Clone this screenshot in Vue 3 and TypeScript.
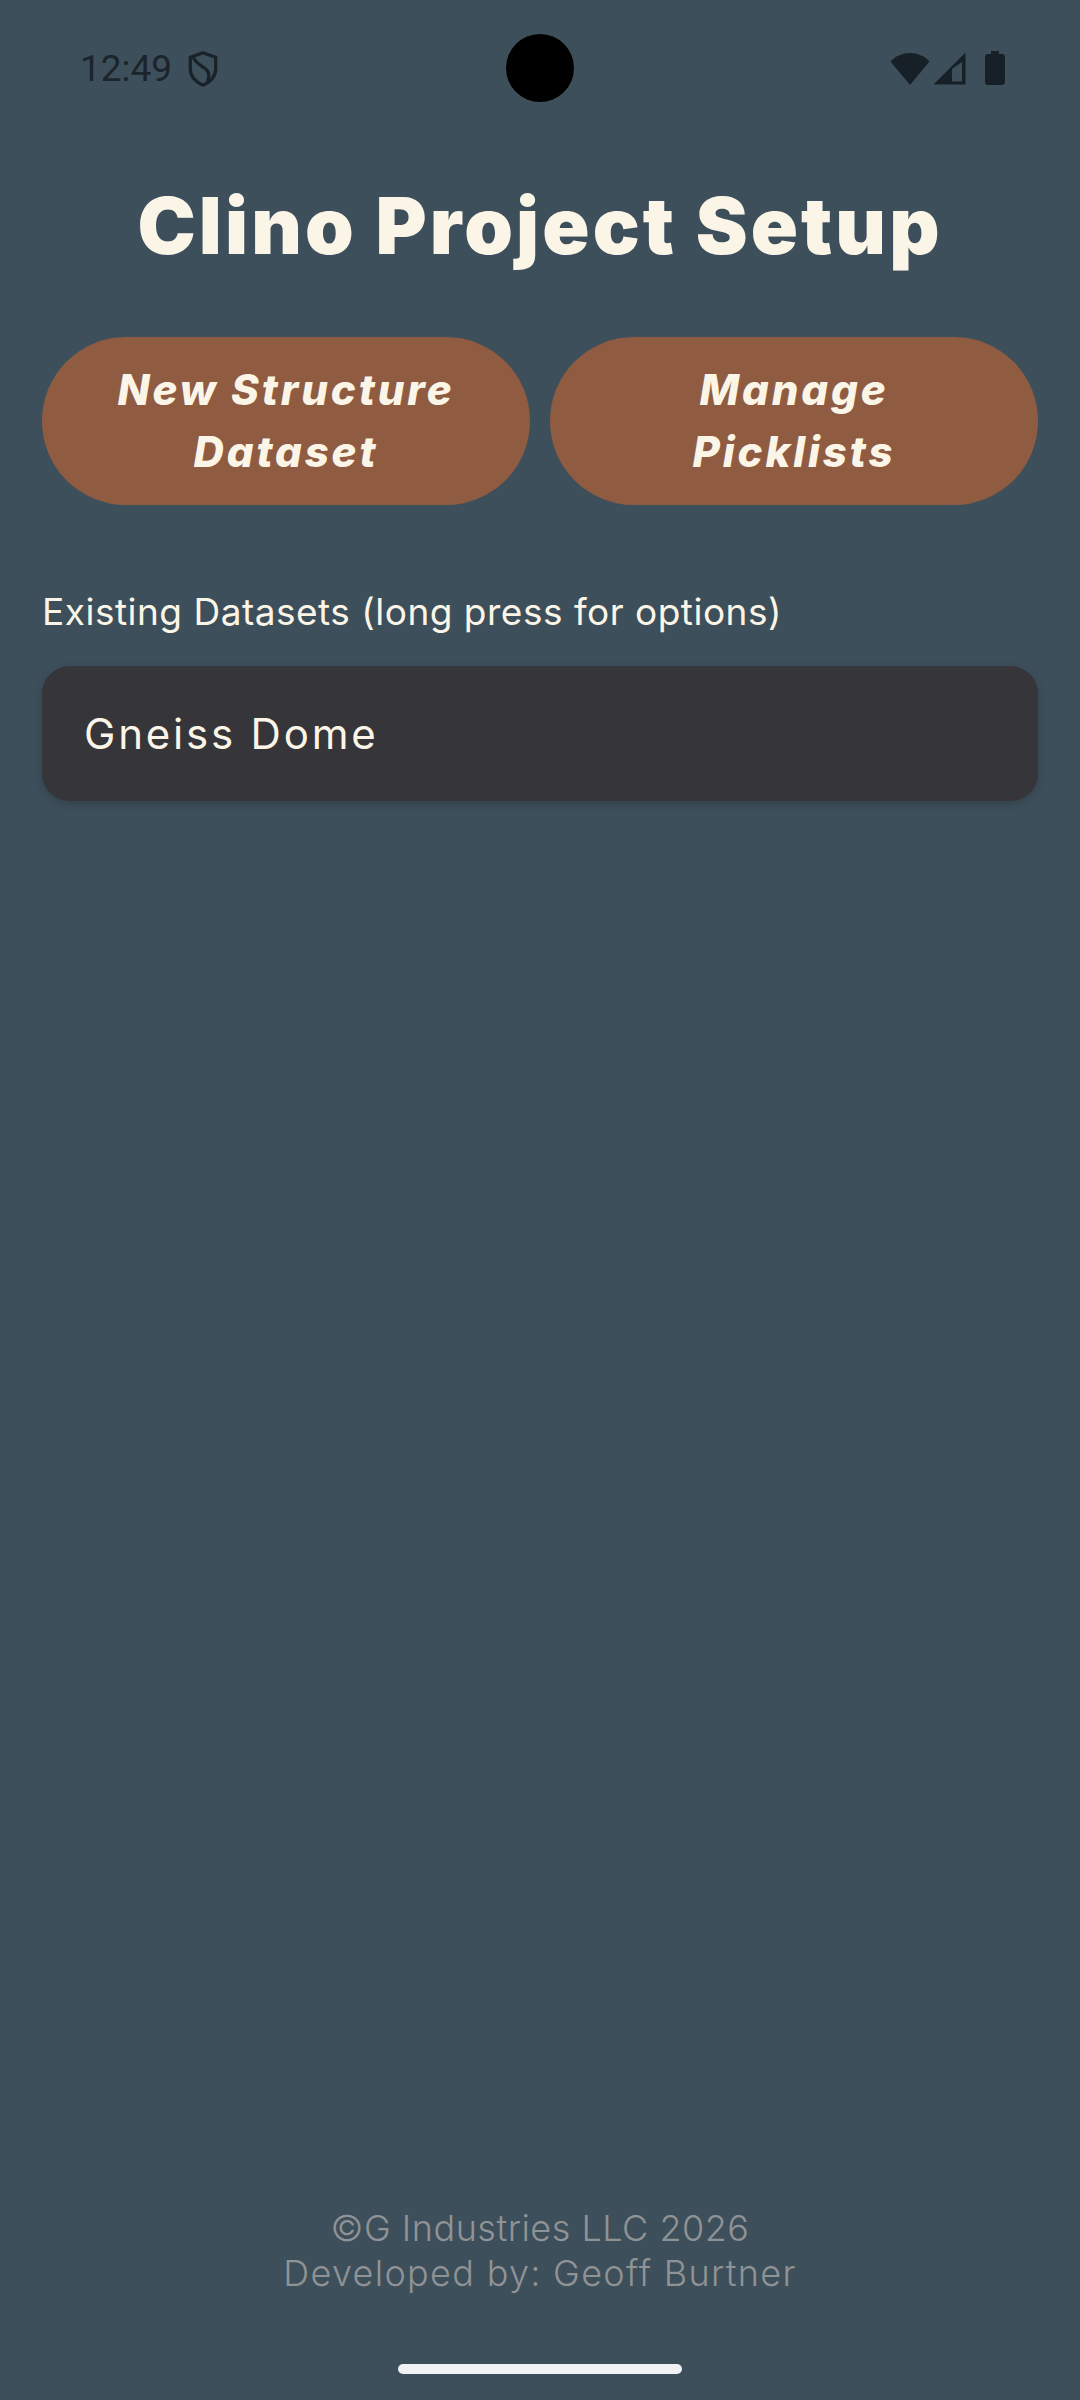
<template>
  <div class="screen">
    <header class="status">
      <div class="status-left">
        <span class="time">12:49</span>
        <svg class="shield" viewBox="0 0 30 36" width="30" height="36">
          <path d="M15 1.8 L27.7 6.2 V18 C27.7 25.5 22 31 15 34.2 C8 31 2.3 25.5 2.3 18 V6.2 Z" fill="none" stroke="#1a2229" stroke-width="3.2" stroke-linejoin="round" />
          <path d="M5 5 C6 11 12 14 16.5 17 C21 20 22 25 19.5 31" fill="none" stroke="#1a2229" stroke-width="3.2" />
        </svg>
      </div>
      <div class="camera"></div>
      <div class="status-right">
        <svg width="40" height="33" viewBox="0 0 40 33">
          <path d="M0.5 9.5 C11 -2 29 -2 39.5 9.5 L20 33 Z" fill="#182027" />
        </svg>
        <svg class="signal" width="33" height="33" viewBox="0 0 33 33">
          <path fill-rule="evenodd" d="M32.5 0.5 V32.5 H0.5 Z M29 10 L19 17 V29.5 H29 Z" fill="#182027" />
        </svg>
        <svg class="battery" width="20" height="34" viewBox="0 0 20 34">
          <path d="M6 0 H14 V3 H17 Q20 3 20 6 V31 Q20 34 17 34 H3 Q0 34 0 31 V6 Q0 3 3 3 H6 Z" fill="#182027" />
        </svg>
      </div>
    </header>

    <h1 class="title">Clino Project Setup</h1>

    <div class="actions">
      <button v-for="label in actions" :key="label" class="action" type="button">{{ label }}</button>
    </div>

    <p class="section-label">Existing Datasets (long press for options)</p>

    <ul class="datasets">
      <li v-for="name in datasets" :key="name" class="dataset">{{ name }}</li>
    </ul>

    <footer class="footer">
      <div class="copyright">©G Industries LLC 2026</div>
      <div class="credit">Developed by: Geoff Burtner</div>
    </footer>

    <div class="home-bar"></div>
  </div>
</template>

<script setup lang="ts">
const actions: string[] = ['New Structure Dataset', 'Manage Picklists'];
const datasets: string[] = ['Gneiss Dome'];
</script>

<style>
html,
body {
  background: #3d4f5b;
}
</style>

<style scoped>
.screen {
  display: flex;
  flex-direction: column;
  box-sizing: border-box;
  width: 1080px;
  height: 2400px;
  padding: 0 42px;
  background: #3d4f5b;
  font-family: Inter, "Open Sans", sans-serif;
  overflow: hidden;
}

.status {
  display: grid;
  grid-template-columns: 1fr 68px 1fr;
  align-items: center;
  height: 68px;
  margin: 34px -42px 0;
  padding: 0 75px;
}

.status-left {
  display: flex;
  align-items: center;
  gap: 16px;
  padding-left: 5px;
}

.time {
  font-family: Roboto, sans-serif;
  font-size: 37px;
  color: #1c242b;
}

.shield {
  margin-top: 2px;
}

.camera {
  width: 68px;
  height: 68px;
  border-radius: 50%;
  background: #000;
}

.status-right {
  display: flex;
  align-items: center;
  justify-content: flex-end;
}

.signal {
  margin-left: 3px;
}

.battery {
  margin-left: 19px;
}

.title {
  margin: 79px 0 0;
  font-size: 78px;
  line-height: 90px;
  font-weight: 900;
  letter-spacing: 3.1px;
  text-align: center;
  color: #fbf5e8;
}

.actions {
  display: grid;
  grid-template-columns: 488px 488px;
  gap: 20px;
  margin-top: 66px;
}

.action {
  height: 168px;
  padding: 0 60px;
  border: none;
  border-radius: 84px;
  background: #8f5c42;
  color: #fbf5e8;
  font-family: inherit;
  font-size: 42px;
  line-height: 62px;
  font-weight: 800;
  font-style: italic;
  letter-spacing: 2.9px;
  text-align: center;
}

.section-label {
  margin: 85px 0 0;
  font-size: 37px;
  line-height: 44px;
  font-weight: 400;
  letter-spacing: 0.5px;
  color: #fbf5e8;
}

.datasets {
  margin: 32px 0 0;
  padding: 0;
  list-style: none;
}

.dataset {
  display: flex;
  align-items: center;
  height: 135px;
  padding: 0 42px;
  border-radius: 28px;
  background: #36353a;
  color: #fbf5e8;
  font-size: 42px;
  letter-spacing: 2.8px;
  box-shadow: 0 3px 8px rgba(0, 0, 0, 0.18);
}

.footer {
  margin-top: auto;
  font-size: 36px;
  line-height: 45px;
  font-weight: 300;
  text-align: center;
  color: #909395;
}

.copyright {
  letter-spacing: 0.5px;
}

.credit {
  letter-spacing: 1.3px;
}

.home-bar {
  flex: none;
  align-self: center;
  width: 284px;
  height: 10px;
  margin: 68px 0 26px;
  border-radius: 5px;
  background: #f0f2f4;
}
</style>
